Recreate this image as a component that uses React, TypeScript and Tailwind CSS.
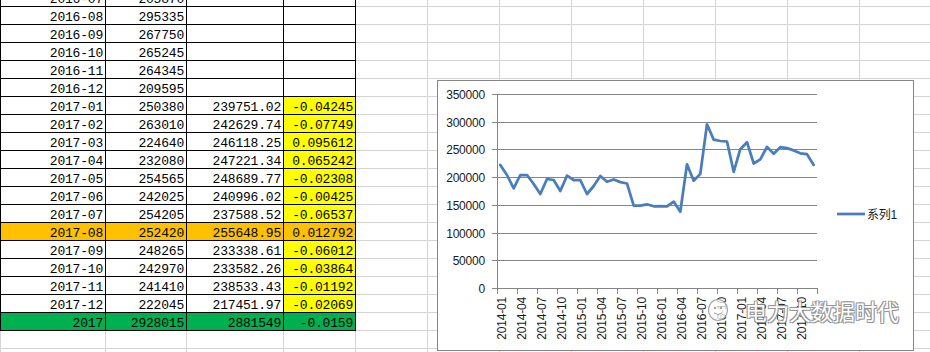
import React from "react";

type Kind = "plain" | "yellow" | "orange" | "green" | "empty";

interface Row {
  kind: Kind;
  cells: [string, string, string, string];
}

const rows: Row[] = [
  { kind: "plain", cells: ["2016-07", "205870", "", ""] },
  { kind: "plain", cells: ["2016-08", "295335", "", ""] },
  { kind: "plain", cells: ["2016-09", "267750", "", ""] },
  { kind: "plain", cells: ["2016-10", "265245", "", ""] },
  { kind: "plain", cells: ["2016-11", "264345", "", ""] },
  { kind: "plain", cells: ["2016-12", "209595", "", ""] },
  { kind: "yellow", cells: ["2017-01", "250380", "239751.02", "-0.04245"] },
  { kind: "yellow", cells: ["2017-02", "263010", "242629.74", "-0.07749"] },
  { kind: "yellow", cells: ["2017-03", "224640", "246118.25", "0.095612"] },
  { kind: "yellow", cells: ["2017-04", "232080", "247221.34", "0.065242"] },
  { kind: "yellow", cells: ["2017-05", "254565", "248689.77", "-0.02308"] },
  { kind: "yellow", cells: ["2017-06", "242025", "240996.02", "-0.00425"] },
  { kind: "yellow", cells: ["2017-07", "254205", "237588.52", "-0.06537"] },
  { kind: "orange", cells: ["2017-08", "252420", "255648.95", "0.012792"] },
  { kind: "yellow", cells: ["2017-09", "248265", "233338.61", "-0.06012"] },
  { kind: "yellow", cells: ["2017-10", "242970", "233582.26", "-0.03864"] },
  { kind: "yellow", cells: ["2017-11", "241410", "238533.43", "-0.01192"] },
  { kind: "yellow", cells: ["2017-12", "222045", "217451.97", "-0.02069"] },
  { kind: "green", cells: ["2017", "2928015", "2881549", "-0.0159"] },
  { kind: "empty", cells: ["", "", "", ""] },
  { kind: "empty", cells: ["", "", "", ""] },
];

// monthly totals 2014-01 .. 2017-12
const series = [
  221900, 203900, 179800, 203900, 203900, 187600, 169600, 196600, 194800,
  175000, 202700, 194800, 194800, 169600, 184000, 202000, 191800, 195700,
  191000, 188600, 148500, 148500, 151000, 147400, 147600, 147400, 155800,
  137700, 223100, 193600, 205870, 295335, 267750, 265245, 264345, 209595,
  250380, 263010, 224640, 232080, 254565, 242025, 254205, 252420, 248265,
  242970, 241410, 222045,
];

const colWidths = ["w-[106px] border-l", "w-[81px]", "w-[97px]", "w-[72px]"];

function SheetRow({ row }: { row: Row }) {
  const empty = row.kind === "empty";
  const line = empty ? "border-[#d4d4d4]" : "border-black";
  return (
    <div className="flex h-[18px]">
      {row.cells.map((c, i) => {
        let bg = "";
        if (row.kind === "orange") bg = "bg-[#ffc000]";
        if (row.kind === "green") bg = "bg-[#00b050]";
        if (row.kind === "yellow" && i === 3) bg = "bg-[#ffff00]";
        return (
          <div
            key={i}
            className={`${colWidths[i]} ${line} ${bg} h-[18px] shrink-0 border-r border-b flex items-end justify-end pr-[2px]`}
          >
            <span className="leading-[12px] whitespace-nowrap">{c}</span>
          </div>
        );
      })}
      {Array.from({ length: 8 }).map((_, i) => (
        <div
          key={"g" + i}
          className="w-[72px] h-[18px] shrink-0 border-r border-b border-[#d4d4d4]"
        />
      ))}
    </div>
  );
}

// ── Chart ────────────────────────────────────────────────────────────────
const X0 = 59;
const X1 = 379;
const Y0 = 207;
const STEP = 194 / 7;

function LineChart() {
  const catW = (X1 - X0) / 48;
  const pts = series
    .map((v, i) => {
      const x = X0 + (i + 0.5) * catW;
      const y = Y0 - (v / 350000) * 194;
      return `${x.toFixed(1)},${y.toFixed(1)}`;
    })
    .join(" ");

  const labels: string[] = [];
  for (let y = 2014; y <= 2017; y++) {
    for (const m of ["01", "04", "07", "10"]) labels.push(`${y}-${m}`);
  }

  return (
    <svg
      width={475}
      height={269}
      className="block"
      style={{ fontFamily: '"Liberation Sans", Arial, sans-serif' }}
    >
      {/* gridlines + y labels */}
      {Array.from({ length: 8 }).map((_, k) => {
        const y = Math.round(Y0 - k * STEP) + 0.5;
        return (
          <g key={k}>
            <line x1={X0 - 5} x2={X1} y1={y} y2={y} stroke="#868686" strokeWidth={1} />
            <text x={47} y={y + 4.5} fontSize={12} textAnchor="end" fill="#1a1a1a">
              {k * 50000}
            </text>
          </g>
        );
      })}
      {/* y axis */}
      <line x1={X0 + 0.5} x2={X0 + 0.5} y1={Math.round(Y0 - 7 * STEP)} y2={Y0 + 0.5} stroke="#868686" />
      {/* x ticks + labels */}
      {Array.from({ length: 17 }).map((_, k) => (
        <line
          key={k}
          x1={X0 + 20 * k + 0.5}
          x2={X0 + 20 * k + 0.5}
          y1={Y0}
          y2={Y0 + 6}
          stroke="#868686"
        />
      ))}
      {labels.map((l, k) => {
        const x = X0 + 20 * k + 8.5;
        return (
          <text
            key={l}
            x={x}
            y={216}
            fontSize={12}
            textAnchor="end"
            fill="#1a1a1a"
            transform={`rotate(-90 ${x} 216)`}
          >
            {l}
          </text>
        );
      })}
      {/* series */}
      <polyline
        points={pts}
        fill="none"
        stroke="#4a7ebb"
        strokeWidth={2.75}
        strokeLinejoin="round"
        strokeLinecap="round"
      />
      {/* legend */}
      <line x1={399} x2={427} y1={133} y2={133} stroke="#4a7ebb" strokeWidth={2.75} />
      <text
        x={429}
        y={138}
        fontSize={12}
        fill="#1a1a1a"
        style={{ fontFamily: '"Liberation Sans", "Noto Sans CJK SC", sans-serif' }}
      >
        系列1
      </text>
    </svg>
  );
}

export default function App() {
  return (
    <div className="relative w-[930px] h-[352px] overflow-hidden bg-white text-black font-['Liberation_Mono',monospace] text-[13px] tracking-[-0.2px]">
      <div className="-mt-[11px]">
        {rows.map((r, i) => (
          <SheetRow key={i} row={r} />
        ))}
      </div>

      {/* embedded chart object */}
      <div className="absolute left-[437px] top-[80px] w-[477px] h-[271px] border border-[#868686] bg-white">
        <LineChart />
      </div>

      {/* watermark */}
      <div className="absolute left-[707px] top-[297px] flex items-center gap-[16px] opacity-90">
        <svg width={22} height={24} viewBox="0 0 22 24">
          <ellipse cx={11} cy={12} rx={9.5} ry={10.5} fill="rgba(255,255,255,0.85)" stroke="#9a9a9a" strokeWidth={1.2} />
          <circle cx={8} cy={10} r={1.3} fill="#9a9a9a" />
          <circle cx={14} cy={10} r={1.3} fill="#9a9a9a" />
          <path d="M7 15 Q11 18 15 15" fill="none" stroke="#9a9a9a" strokeWidth={1} />
        </svg>
        <span className="text-[22px] leading-[26px] tracking-[0px] text-white font-['Noto_Sans_CJK_SC',sans-serif] [text-shadow:1px_1px_0_#8a8a8a,-1px_-1px_0_#8a8a8a,1px_-1px_0_#8a8a8a,-1px_1px_0_#8a8a8a]">
          电力大数据时代
        </span>
      </div>
    </div>
  );
}
